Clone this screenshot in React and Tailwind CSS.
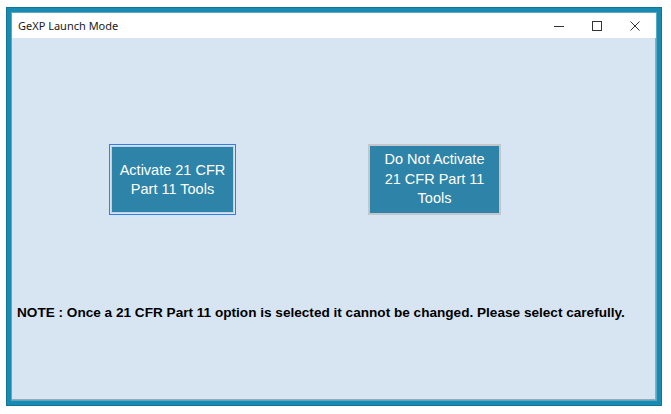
export default function App() {
  return (
    <div className="w-[671px] h-[414px] bg-white pl-[6px] pt-[7px] overflow-hidden">
      <div className="w-[656px] h-[399px] bg-[#0f7497] p-px">
        <div className="w-full h-full bg-[#1a8bb0] p-[4px]">
          <div className="w-full h-full border border-[#5aa9c4] flex flex-col">
            {/* Title bar */}
            <div className="h-[25px] bg-white flex items-center pl-[6px] shrink-0">
              <span className="flex-1 text-[11px] text-[#1a1a1a] font-['Noto_Sans',sans-serif] leading-none">
                GeXP Launch Mode
              </span>
              <div className="flex items-center h-full">
                <div className="w-[38px] h-full flex items-center justify-center">
                  <svg width="10" height="10" viewBox="0 0 10 10">
                    <path d="M0 5.5h10" stroke="#333" strokeWidth="1" />
                  </svg>
                </div>
                <div className="w-[38px] h-full flex items-center justify-center">
                  <svg width="10" height="10" viewBox="0 0 10 10">
                    <rect x="0.5" y="0.5" width="9" height="9" fill="none" stroke="#333" strokeWidth="1" />
                  </svg>
                </div>
                <div className="w-[38px] h-full flex items-center justify-center mr-[2px]">
                  <svg width="10" height="10" viewBox="0 0 10 10">
                    <path d="M0.5 0.5l9 9M9.5 0.5l-9 9" stroke="#333" strokeWidth="1" />
                  </svg>
                </div>
              </div>
            </div>
            {/* Content */}
            <div className="flex-1 bg-[#d7e4f1] border-r border-b border-[#9aa8b4] flex flex-col font-['Liberation_Sans',Arial,sans-serif]">
              <div className="flex items-start pt-[106px] pl-[97px] gap-[132px]">
                <button className="w-[127px] h-[71px] border border-[#2f7fe8] p-px">
                  <div className="w-full h-full border border-[#b9d4ea] bg-[#2e84a8] flex items-center justify-center text-center text-white text-[14.5px] leading-[19px]">
                    Activate 21 CFR
                    <br />
                    Part 11 Tools
                  </div>
                </button>
                <button className="w-[133px] h-[71px] border-2 border-[#c3c7cb] bg-[#2e84a8] flex items-center justify-center text-center text-white text-[14.5px] leading-[19.5px]">
                  Do Not Activate
                  <br />
                  21 CFR Part 11
                  <br />
                  Tools
                </button>
              </div>
              <p className="mt-[91px] pl-[5px] text-[13.6px] font-bold text-black leading-none whitespace-nowrap">
                NOTE : Once a 21 CFR Part 11 option is selected it cannot be changed. Please select carefully.
              </p>
            </div>
          </div>
        </div>
      </div>
    </div>
  );
}
